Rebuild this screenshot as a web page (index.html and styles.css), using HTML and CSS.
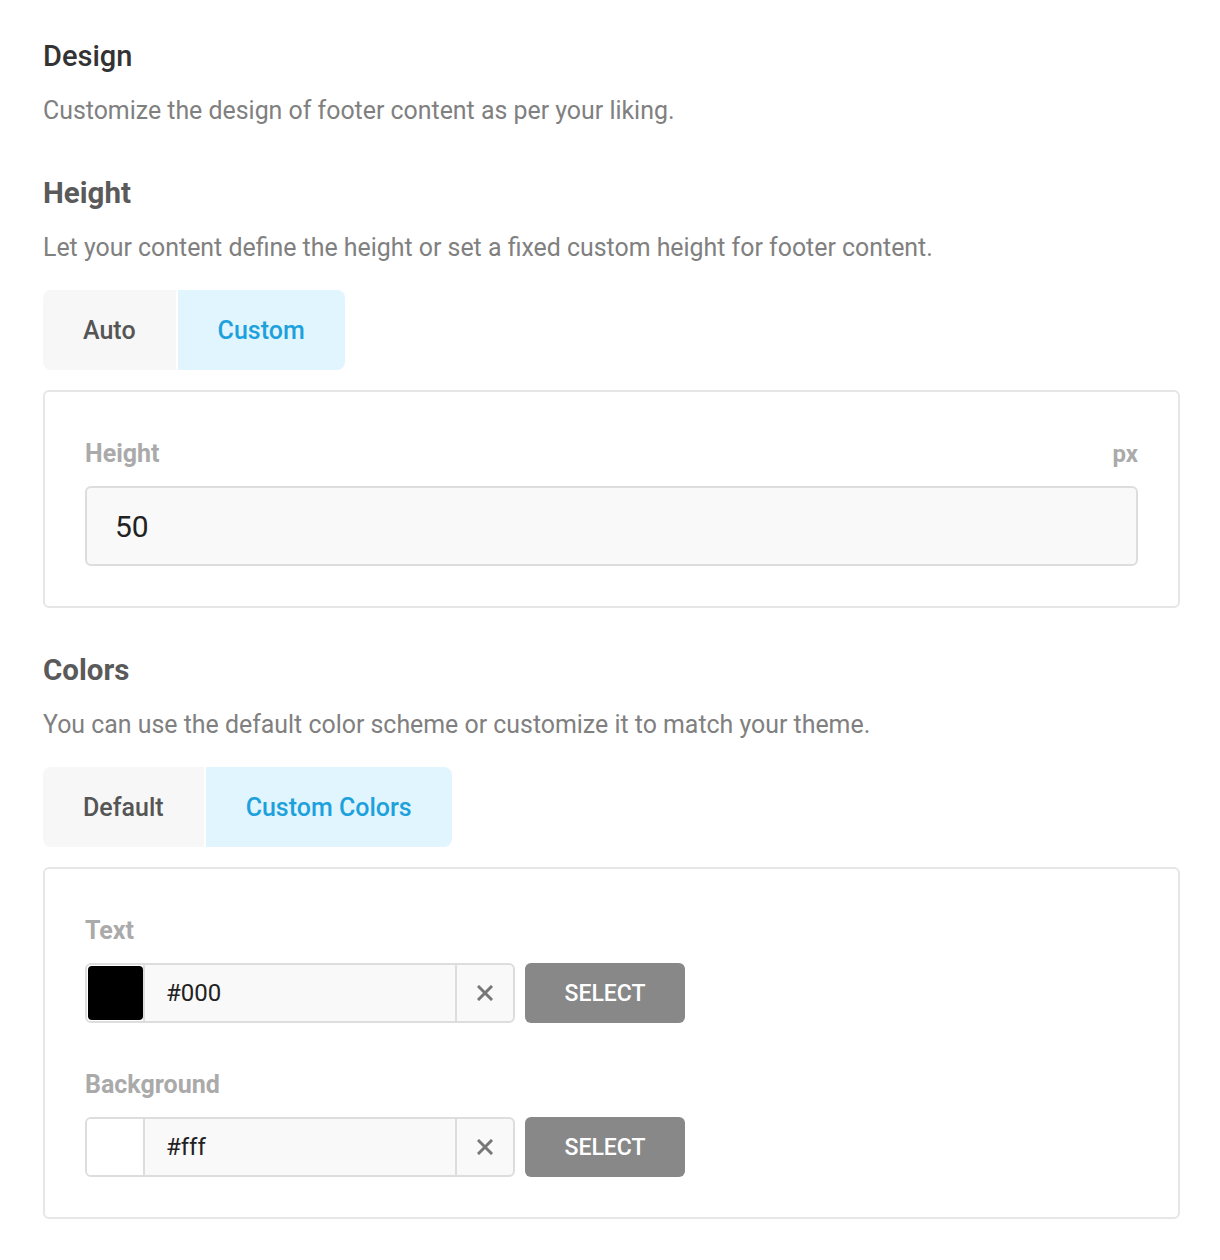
FILE: index.html
```html
<!DOCTYPE html>
<html>
<head>
<meta charset="utf-8">
<link rel="stylesheet" href="styles.css">
</head>
<body>
<div class="page">
  <h1 class="title">Design</h1>
  <p class="desc">Customize the design of footer content as per your liking.</p>

  <h2 class="section">Height</h2>
  <p class="desc">Let your content define the height or set a fixed custom height for footer content.</p>
  <div class="toggle">
    <div class="opt">Auto</div>
    <div class="opt active">Custom</div>
  </div>
  <div class="box">
    <div class="label-row">
      <span class="label">Height</span>
      <span class="unit">px</span>
    </div>
    <div class="num-input">50</div>
  </div>

  <h2 class="section">Colors</h2>
  <p class="desc">You can use the default color scheme or customize it to match your theme.</p>
  <div class="toggle">
    <div class="opt">Default</div>
    <div class="opt active">Custom Colors</div>
  </div>
  <div class="box">
    <div class="field">
      <div class="label-row"><span class="label">Text</span></div>
      <div class="color-row">
        <div class="color-input">
          <div class="swatch-wrap"><div class="swatch black"></div></div>
          <div class="hex">#000</div>
          <div class="clear"><svg width="16" height="16" viewBox="0 0 16 16"><path d="M2 2L14 14M14 2L2 14" stroke="#777" stroke-width="3" stroke-linecap="square"/></svg></div>
        </div>
        <div class="select-btn">SELECT</div>
      </div>
    </div>
    <div class="field">
      <div class="label-row"><span class="label">Background</span></div>
      <div class="color-row">
        <div class="color-input">
          <div class="swatch-wrap"><div class="swatch white"></div></div>
          <div class="hex">#fff</div>
          <div class="clear"><svg width="16" height="16" viewBox="0 0 16 16"><path d="M2 2L14 14M14 2L2 14" stroke="#777" stroke-width="3" stroke-linecap="square"/></svg></div>
        </div>
        <div class="select-btn">SELECT</div>
      </div>
    </div>
  </div>
</div>
</body>
</html>
```

FILE: styles.css
```css
* { box-sizing: border-box; }
html, body { margin: 0; padding: 0; background: #fff; }
body { font-family: Roboto, "Liberation Sans", sans-serif; }
.page { padding: 0 40px 40px 43px; }

.title {
  margin: 38px 0 0;
  font-size: 29px;
  line-height: 36px;
  font-weight: 500;
  color: #333;
}
.section {
  margin: 48px 0 0;
  font-size: 29.5px;
  line-height: 36px;
  font-weight: 700;
  color: #5a5a5a;
}
.box + .section { margin-top: 44px; }
.desc {
  margin: 21px 0 0;
  font-size: 24.9px;
  line-height: 32px;
  color: #808080;
}
.toggle {
  margin-top: 26px;
  display: inline-flex;
  gap: 2px;
  border-radius: 8px;
  overflow: hidden;
  vertical-align: top;
}
.opt {
  height: 80px;
  padding: 0 40px;
  display: flex;
  align-items: center;
  font-size: 25px;
  font-weight: 500;
  color: #555;
  background: #f7f7f7;
}
.opt.active { background: #e1f5fe; color: #1da1dc; }

.box {
  margin-top: 20px;
  border: 2px solid #e6e6e6;
  border-radius: 6px;
  padding: 40px;
}
.label-row {
  display: flex;
  justify-content: space-between;
  align-items: baseline;
  line-height: 44px;
  margin-bottom: 10px;
}
.label {
  font-size: 25px;
  font-weight: 700;
  color: #aaa;
}
.unit {
  font-size: 24px;
  font-weight: 700;
  color: #aaa;
}
.num-input {
  height: 80px;
  border: 2px solid #ddd;
  border-radius: 6px;
  background: #f9f9f9;
  display: flex;
  align-items: center;
  padding-left: 28px;
  font-size: 30px;
  color: #222;
}
.field + .field { margin-top: 40px; }
.color-row { display: flex; gap: 10px; }
.color-input {
  width: 430px;
  height: 60px;
  border: 2px solid #ddd;
  border-radius: 6px;
  background: #f9f9f9;
  display: flex;
  overflow: hidden;
}
.swatch-wrap {
  width: 58px;
  border-right: 2px solid #ddd;
  background: #fff;
  display: flex;
}
.swatch { flex: 1; }
.swatch.black { background: #000; border-radius: 4px; margin: 1px 0 1px 1px; }
.swatch.white { background: #fff; }
.hex {
  flex: 1;
  display: flex;
  align-items: center;
  padding-left: 21px;
  font-size: 24px;
  color: #222;
}
.clear {
  width: 58px;
  border-left: 2px solid #ddd;
  display: flex;
  align-items: center;
  justify-content: center;
}
.select-btn {
  width: 160px;
  height: 60px;
  border-radius: 6px;
  background: #888;
  color: #fff;
  font-size: 23px;
  font-weight: 500;
  display: flex;
  align-items: center;
  justify-content: center;
}
```
